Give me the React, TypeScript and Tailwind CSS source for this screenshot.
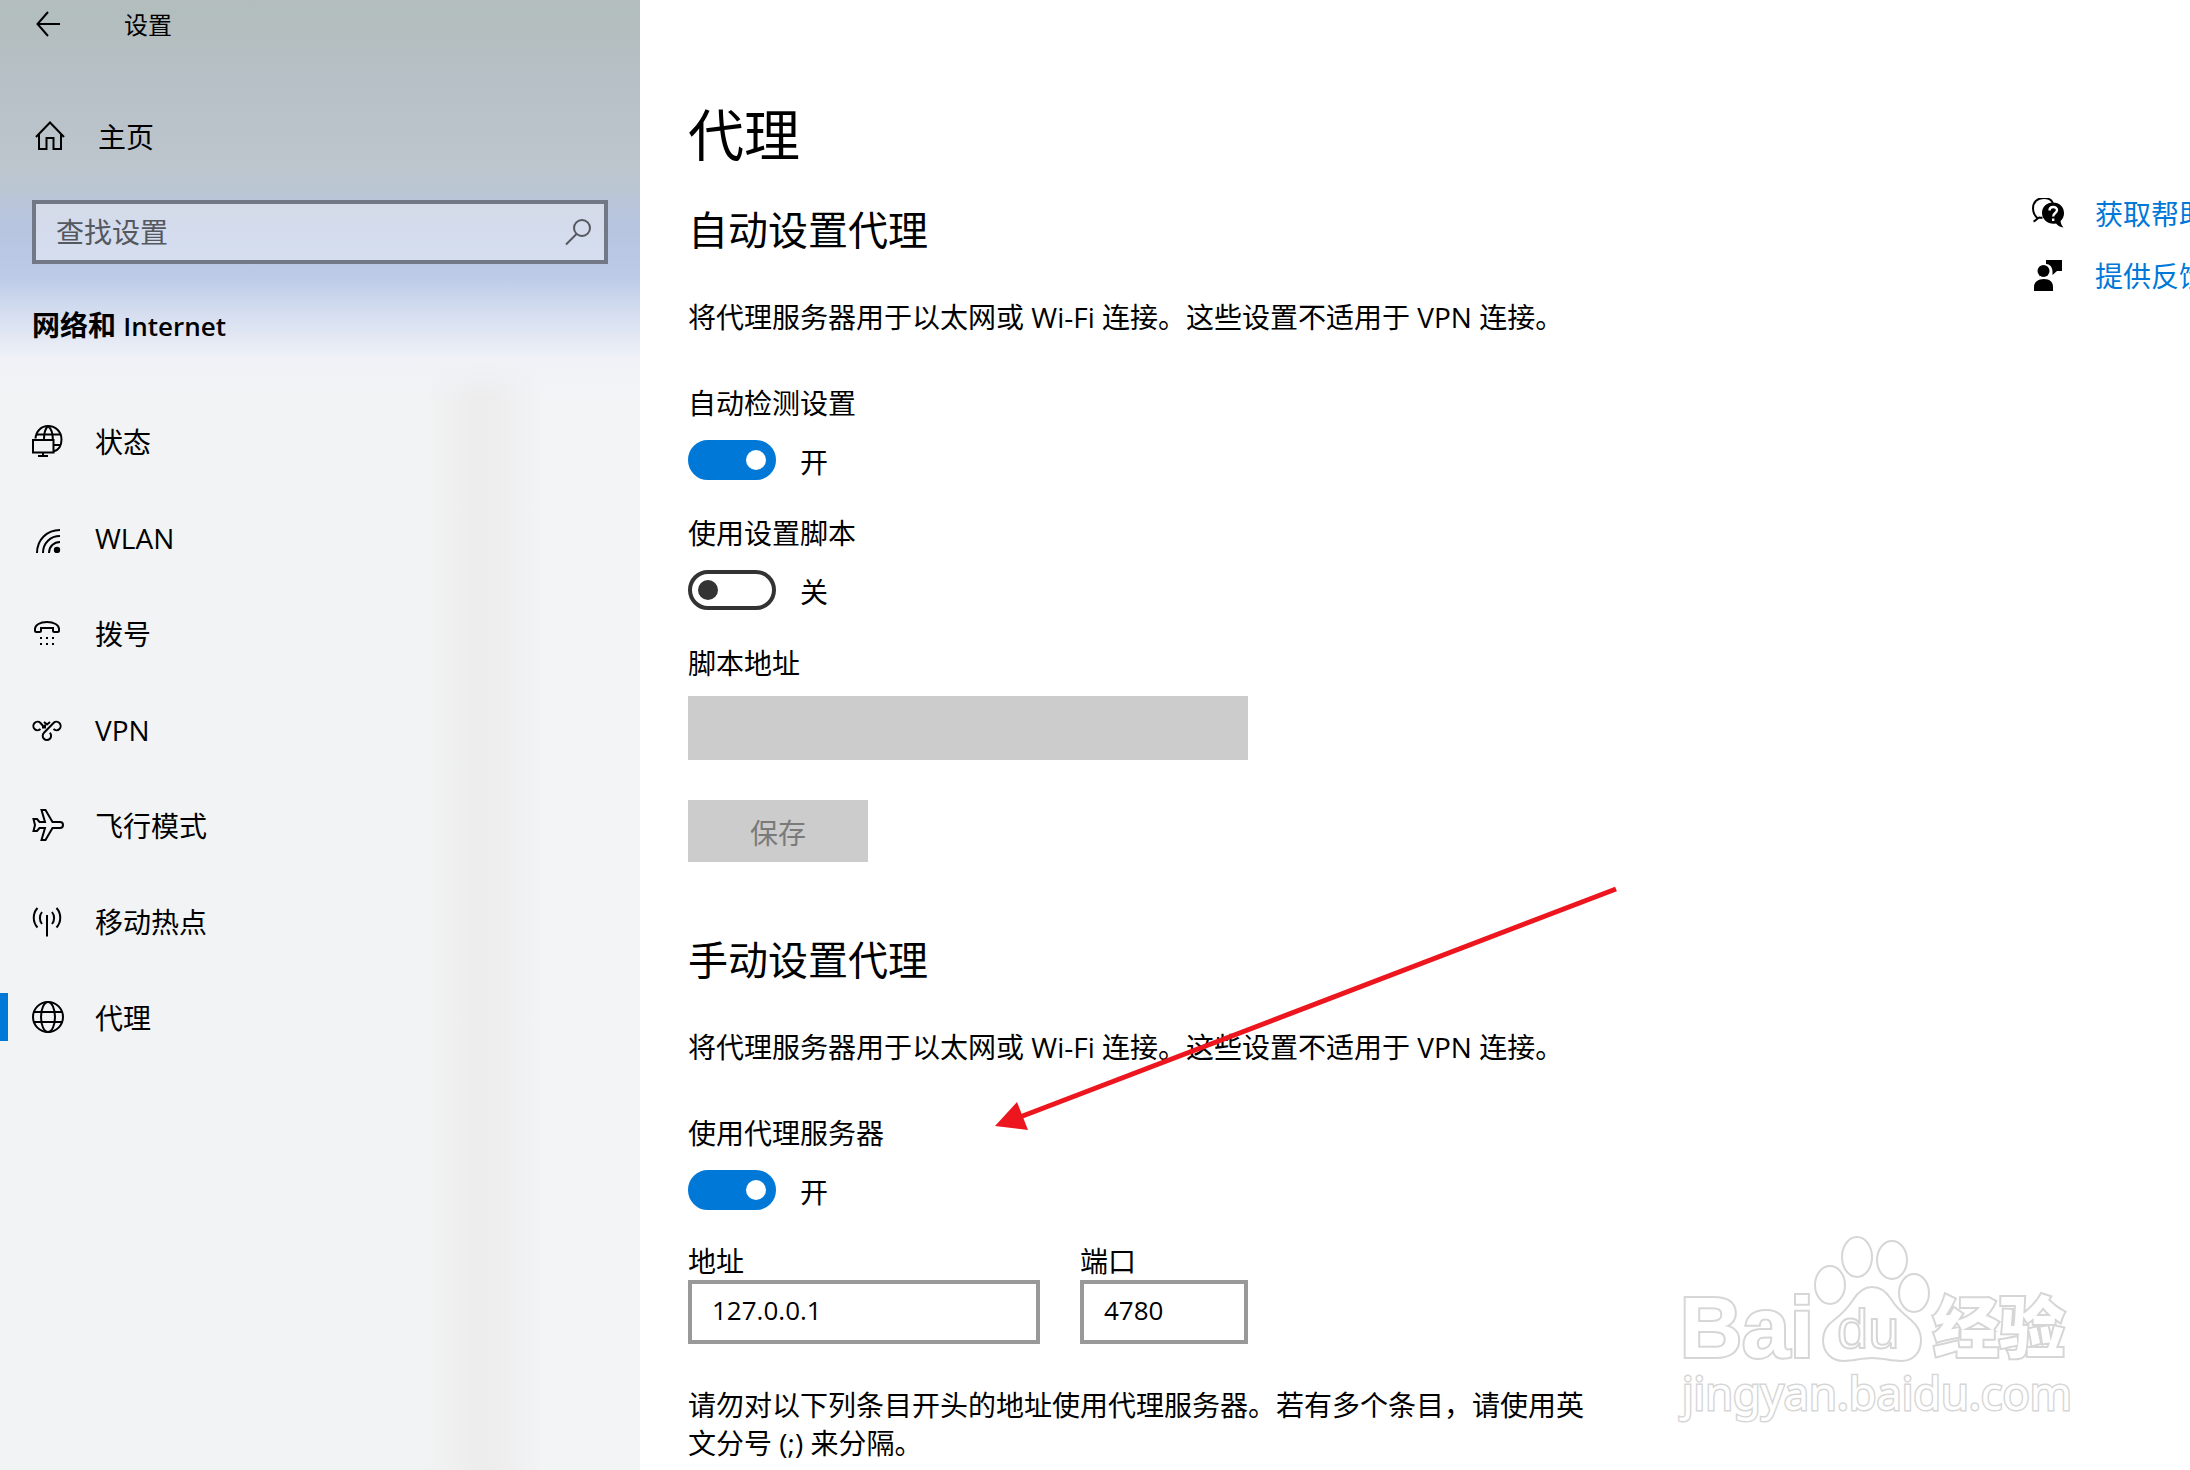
import { useState, type ReactNode } from 'react'

const NAV_ITEMS = [
  { id: 'status',   label: '状态',     icon: <StatusIcon /> },
  { id: 'wlan',     label: 'WLAN',     icon: <WlanIcon /> },
  { id: 'dialup',   label: '拨号',     icon: <DialupIcon /> },
  { id: 'vpn',      label: 'VPN',      icon: <VpnIcon /> },
  { id: 'airplane', label: '飞行模式', icon: <AirplaneIcon /> },
  { id: 'hotspot',  label: '移动热点', icon: <HotspotIcon /> },
  { id: 'proxy',    label: '代理',     icon: <GlobeIcon /> },
]

function Icon({ children }: { children: ReactNode }) {
  return (
    <svg
      viewBox="0 0 32 32"
      className="size-8 shrink-0"
      fill="none"
      stroke="currentColor"
      strokeWidth="2"
      aria-hidden="true"
    >
      {children}
    </svg>
  )
}

function BackIcon() {
  return (
    <Icon>
      <path d="M28 16H6M16 4 5.500 16 16 28" />
    </Icon>
  )
}

function HomeIcon() {
  return (
    <Icon>
      <path d="M2 17 16 2.500 30 17M5 14.500V29H12.500V18h7v11H27V14.500" />
    </Icon>
  )
}

function SearchIcon() {
  return (
    <Icon>
      <circle cx="20" cy="12" r="8" />
      <path d="M14.500 18 4 28.500" />
    </Icon>
  )
}

function StatusIcon() {
  return (
    <Icon>
      <path d="M3.500 13.500C4 6 9.500 1 16 1c7.500 0 13.500 5.500 13.500 13.500 0 6.500-3 10.500-8 12" />
      <path d="M4.500 9.500h24M22 20h6.500M12 14c0-6 1.500-10.500 4-13M16 1c3 2.500 4.800 7 4.800 13" />
      <path d="M1 15h20.500v12.500H1zM11 27.500V31M6 31h10" />
    </Icon>
  )
}

function WlanIcon() {
  return (
    <Icon>
      <path d="M5 32C5 18.500 15 9 28 9M11 32c0-10 7.500-17 17-17M17 32c0-6.500 5-11 11-11" />
      <circle cx="25" cy="29" r="3.200" fill="currentColor" stroke="none" />
    </Icon>
  )
}

function DialupIcon() {
  return (
    <Icon>
      <path d="M3 13.500V12c0-4 5-7 12-7s12 3 12 7v1.500c0 1-.5 1.500-1.500 1.500h-3c-1 0-1.500-.5-1.500-1.500V11H9v2.500c0 1-.5 1.500-1.500 1.500h-3C3.500 15 3 14.500 3 13.500z" />
      <path d="M8 21h2M14 21h2M20 21h2M8 27h2M14 27h2M20 27h2" />
    </Icon>
  )
}

function VpnIcon() {
  return (
    <Icon>
      <path d="M8.500 16a4.200 4.200 0 1 1 0-6l4 4.500M10 14.500h3v-3" />
      <path d="M21.500 16a4.200 4.200 0 1 0 0-6L12 19.800a4.200 4.200 0 1 0 5.800 0M12 9l3 2.500L18 9" />
    </Icon>
  )
}

function AirplaneIcon() {
  return (
    <Icon>
      <path d="M9.500 1h4l7 12H28c1.800 0 3 1.200 3 3s-1.200 3-3 3h-7.500l-7 12h-4L13 19H7.500L5 22H1.500L3 16 1.500 10H5l2.500 3H13z" />
    </Icon>
  )
}

function HotspotIcon() {
  return (
    <Icon>
      <path d="M15 10v21.500M10 7c-2.800 3.500-2.800 8.500 0 12M5.500 3c-5 5.500-5 14 0 19.500M20 7c2.800 3.500 2.800 8.500 0 12M24.500 3c5 5.500 5 14 0 19.500" />
    </Icon>
  )
}

function GlobeIcon() {
  return (
    <Icon>
      <circle cx="16" cy="16" r="15" />
      <ellipse cx="16" cy="16" rx="7" ry="15" />
      <path d="M2 11h28M2 21h28" />
    </Icon>
  )
}

function HelpIcon() {
  return (
    <Icon>
      <path d="M6 20.500C2.800 18 1 15 1 10.500 1 4 5.500 0 11.500 0 16 0 19.500 1.500 20.800 5M1.500 23.500c3-1 3.500-3.500 6-4 1 .3 2 .3 3 0" />
      <path
        d="M21 4.500c6.500 0 11 4.500 11 10.500 0 3.500-1.200 6-3.500 8 .3 2.500 1.200 4.500 3 6.500-3.500-.3-5.500-1.800-7.500-4-7 1.500-14-3.500-14-10.500C10 9 14.500 4.500 21 4.500z"
        fill="currentColor"
        stroke="none"
      />
      <path d="M17.500 12.500c0-4.500 7.500-4.500 7.500-.5 0 3-3.800 3-3.800 6.500M21.200 20.500v2.500" stroke="white" strokeWidth="2.400" />
    </Icon>
  )
}

function FeedbackIcon() {
  return (
    <Icon>
      <g fill="currentColor" stroke="none">
        <circle cx="11.500" cy="11" r="6" />
        <path d="M2 31v-4c0-5 4-8 10-8s9 3 9 8v4zM14 0h16v11h-5l-4.500 4v-4c-.5-4-2.500-7-6.500-7z" />
      </g>
    </Icon>
  )
}

function Toggle({ id, label, defaultOn }: { id: string; label: string; defaultOn: boolean }) {
  const [on, setOn] = useState(defaultOn)

  return (
    <div className="flex flex-col gap-[18px]">
      <label htmlFor={id}>{label}</label>
      <div className="flex h-10 items-center gap-6">
        <input
          id={id}
          type="checkbox"
          role="switch"
          checked={on}
          onChange={e => setOn(e.target.checked)}
          className="flex h-10 w-[88px] appearance-none items-center rounded-full border-4 border-[#333333] px-1.5 before:size-5 before:rounded-full before:bg-[#333333] checked:justify-end checked:border-[#0078d7] checked:bg-[#0078d7] checked:before:bg-white"
        />
        <span className="pt-1">{on ? '开' : '关'}</span>
      </div>
    </div>
  )
}

function Sidebar() {
  return (
    <aside className="w-[640px] shrink-0 bg-[#f2f3f4] bg-[linear-gradient(180deg,#b2bdbc_0,#b7c0c6_80px,#bdc6cd_170px,#b6c4df_225px,#bccae8_275px,#d3dcef_310px,#f0f2f7_360px,#f2f3f400_400px),linear-gradient(90deg,#f2f3f4_66%,#ededed_74%,#ededed_77%,#f3f4f6_85%)]">
      <header className="flex h-12 items-center gap-[60px] pl-8">
        <button type="button" aria-label="返回">
          <BackIcon />
        </button>
        <span className="pt-0.5 text-2xl">设置</span>
      </header>

      <a href="#home" className="mt-16 flex h-12 items-center gap-8 pl-[34px]">
        <HomeIcon />
        <span className="pt-0.5">主页</span>
      </a>

      <div className="mx-8 mt-10 flex h-16 items-center border-4 border-[#727885] bg-white/40 pr-2.5 pl-5 text-[#55585f]">
        <input
          type="search"
          aria-label="查找设置"
          placeholder="查找设置"
          className="min-w-0 flex-1 outline-none placeholder:text-[#55585f]"
        />
        <SearchIcon />
      </div>

      <h2 className="mt-[42px] px-8 font-bold">
        网络和 <span className="text-[26px] font-semibold">Internet</span>
      </h2>

      <nav className="mt-12">
        {NAV_ITEMS.map(({ id, label, icon }) => (
          <a
            key={id}
            href={`#${id}`}
            aria-current={id === 'proxy' ? 'page' : undefined}
            className="group flex h-24 items-center"
          >
            <span className="h-12 w-8 shrink-0 border-l-8 border-transparent group-aria-[current=page]:border-[#0078d7]" />
            {icon}
            <span className="ml-[31px] pt-0.5">{label}</span>
          </a>
        ))}
      </nav>
    </aside>
  )
}

function RelatedLinks() {
  return (
    <div className="absolute top-[188px] left-[1392px] flex flex-col gap-2.5 whitespace-nowrap text-[#0078d7]">
      <a href="#help" className="flex h-[52px] items-center gap-[31px]">
        <span className="text-black"><HelpIcon /></span>
        获取帮助
      </a>
      <a href="#feedback" className="flex h-[52px] items-center gap-[31px]">
        <span className="text-black"><FeedbackIcon /></span>
        提供反馈
      </a>
    </div>
  )
}

function Watermark() {
  return (
    <svg
      viewBox="0 0 440 230"
      className="pointer-events-none absolute top-[1210px] left-[1020px] w-[440px]"
      fill="white"
      stroke="#d6d6d6"
      strokeWidth="2"
      aria-hidden="true"
    >
      <g strokeWidth="4" paintOrder="stroke">
        <text x="20" y="147" fontSize="86" className="font-['Liberation_Sans',sans-serif] font-bold">Bai</text>
        <text x="273" y="142" fontSize="66" className="font-['Noto_Sans_CJK_SC',sans-serif] font-black">经验</text>
      </g>
      <ellipse cx="170" cy="75" rx="15" ry="19" />
      <ellipse cx="197" cy="47" rx="15" ry="20" />
      <ellipse cx="232" cy="50" rx="15" ry="19" />
      <ellipse cx="254" cy="83" rx="15" ry="19" />
      <path d="M212 77c8 0 14 4 19 12 6 10 12 14 20 21 7 6 10 12 10 20 0 13-8 21-20 21-10 0-18-3-29-3s-18 3-28 3c-13 0-21-9-21-21 0-9 4-15 11-20 8-6 13-11 19-20 5-8 11-13 19-13z" />
      <text x="177" y="138" fontSize="56" className="font-['Liberation_Sans',sans-serif]">du</text>
      <text x="22" y="200" fontSize="45" strokeWidth="3" paintOrder="stroke" className="font-['Noto_Sans',sans-serif]">
        jingyan.baidu.com
      </text>
    </svg>
  )
}

// Pointer drawn over the page towards the manual proxy switch
function Pointer() {
  return (
    <svg viewBox="0 0 640 260" className="pointer-events-none absolute top-[880px] left-[345px] w-[640px]" aria-hidden="true">
      <path d="M631 9 35 237" stroke="#ed161f" strokeWidth="5" />
      <path d="M10 246 32 222 43 250z" fill="#ed161f" />
    </svg>
  )
}

export default function App() {
  return (
    <div className="flex h-screen overflow-hidden bg-white font-['Open_Sans','Noto_Sans_CJK_SC',sans-serif] text-[28px] leading-[38px] text-black">
      <Sidebar />

      <main className="relative min-w-0 flex-1 px-12 pt-[98px]">
        <h1 className="text-[56px] leading-[72px]">代理</h1>

        <section>
          <h2 className="mt-8 text-[40px] leading-[56px]">自动设置代理</h2>
          <p className="mt-10">将代理服务器用于以太网或 Wi-Fi 连接。这些设置不适用于 VPN 连接。</p>

          <div className="mt-12 flex flex-col gap-[34px]">
            <Toggle id="auto-detect" label="自动检测设置" defaultOn />
            <Toggle id="use-script" label="使用设置脚本" defaultOn={false} />
          </div>

          <div className="mt-[34px] flex w-[560px] flex-col gap-3.5">
            <label htmlFor="script-url">脚本地址</label>
            <input id="script-url" type="text" disabled className="h-16 bg-[#cccccc] px-6" />
          </div>
          <button type="button" disabled className="mt-10 h-[62px] w-[180px] bg-[#cccccc] pt-1 text-[#7a7a7a]">
            保存
          </button>
        </section>

        <section>
          <h2 className="mt-[70px] text-[40px] leading-[56px]">手动设置代理</h2>
          <p className="mt-10">将代理服务器用于以太网或 Wi-Fi 连接。这些设置不适用于 VPN 连接。</p>

          <div className="mt-12">
            <Toggle id="use-proxy" label="使用代理服务器" defaultOn />
          </div>

          <div className="mt-8 flex gap-10">
            <div className="flex w-[352px] flex-col">
              <label htmlFor="proxy-address">地址</label>
              <input
                id="proxy-address"
                type="text"
                defaultValue="127.0.0.1"
                className="h-16 border-4 border-[#999999] px-5 pb-1 text-[26px]"
              />
            </div>
            <div className="flex w-[168px] flex-col">
              <label htmlFor="proxy-port">端口</label>
              <input
                id="proxy-port"
                type="text"
                defaultValue="4780"
                className="h-16 border-4 border-[#999999] px-5 pb-1 text-[26px]"
              />
            </div>
          </div>

          <p className="mt-[42px] max-w-[908px]">
            请勿对以下列条目开头的地址使用代理服务器。若有多个条目，请使用英文分号 (;) 来分隔。
          </p>
        </section>

        <RelatedLinks />
        <Watermark />
        <Pointer />
      </main>
    </div>
  )
}
